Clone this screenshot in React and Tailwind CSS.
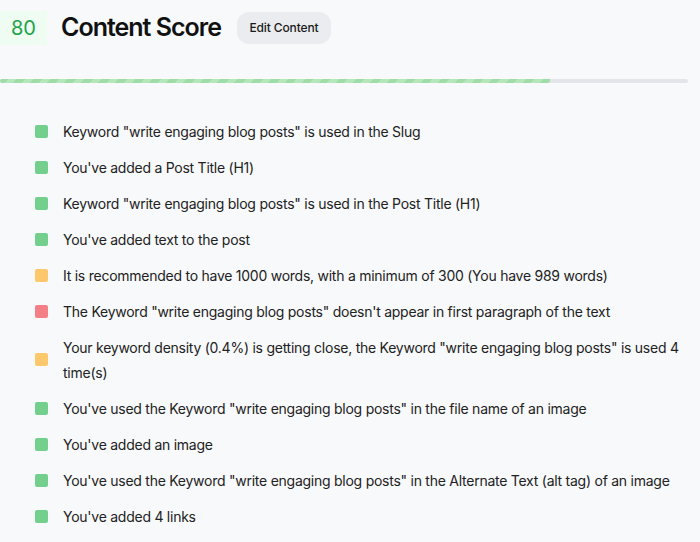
import React from "react";

const items = [
  ["g", 'Keyword "write engaging blog posts" is used in the Slug'],
  ["g", "You've added a Post Title (H1)"],
  ["g", 'Keyword "write engaging blog posts" is used in the Post Title (H1)'],
  ["g", "You've added text to the post"],
  ["y", "It is recommended to have 1000 words, with a minimum of 300 (You have 989 words)"],
  ["r", 'The Keyword "write engaging blog posts" doesn\'t appear in first paragraph of the text'],
  ["y", 'Your keyword density (0.4%) is getting close, the Keyword "write engaging blog posts" is used 4 time(s)'],
  ["g", 'You\'ve used the Keyword "write engaging blog posts" in the file name of an image'],
  ["g", "You've added an image"],
  ["g", 'You\'ve used the Keyword "write engaging blog posts" in the Alternate Text (alt tag) of an image'],
  ["g", "You've added 4 links"],
];

const colors = {
  g: "bg-[#72d08c]",
  y: "bg-[#fdc76b]",
  r: "bg-[#f47f87]",
};

export default function App() {
  return (
    <div
      className="min-h-[542px] bg-[#f8f9fb] text-[#1f2328]"
      style={{ fontFamily: "Inter, 'Noto Sans', sans-serif" }}
    >
      <div className="flex items-center pt-[9px]">
        <div className="flex h-[34px] w-[47px] items-center justify-center bg-[#effcf2] text-[20px] text-[#22a34a]">
          80
        </div>
        <h1 className="ml-[14px] text-[25px] font-semibold tracking-[-0.04em] text-[#111]">
          Content Score
        </h1>
        <button className="ml-[16px] h-[32px] w-[94px] rounded-xl bg-[#ebecef] text-[12px] font-medium tracking-[-0.01em] text-[#1a1a1a]">
          Edit Content
        </button>
      </div>

      <div className="mt-[32px] mr-[12px] h-[4px] rounded-full bg-[#e4e5ea]">
        <div
          className="h-full rounded-l-full"
          style={{
            width: "80%",
            backgroundImage:
              "repeating-linear-gradient(135deg, #9fdca8 0px, #9fdca8 6px, #b6e6bc 6px, #b6e6bc 12px)",
          }}
        />
      </div>

      <ul className="mt-[36px] flex flex-col gap-[11px] pl-[35px] pr-[20px]">
        {items.map(([c, t], i) => (
          <li key={i} className="flex items-center">
            <span className={`h-[13px] w-[13px] shrink-0 rounded-[2px] ${colors[c]}`} />
            <span className="ml-[15px] text-[14px] leading-[25px] tracking-[-0.018em] text-[#222]">{t}</span>
          </li>
        ))}
      </ul>
    </div>
  );
}
